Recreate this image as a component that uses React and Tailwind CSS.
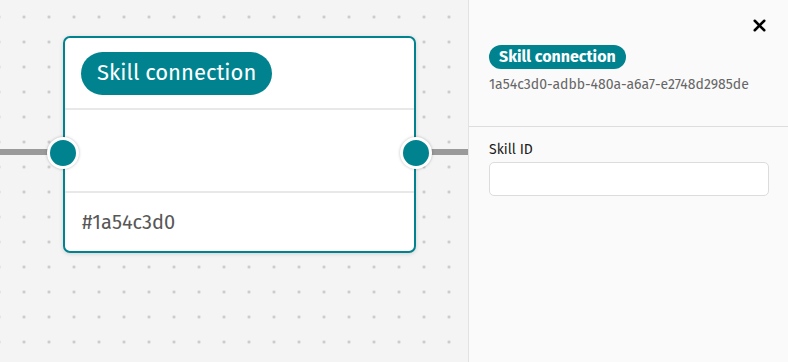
import React from 'react';
import { X } from 'lucide-react';

const FONT = "font-['Fira_Sans','Noto_Sans','Open_Sans',sans-serif]";

function Port({ side }) {
  return (
    <div
      className={`absolute top-[99px] h-[32px] w-[32px] rounded-full border-[3px] border-white bg-[#00838f] shadow-[0_0_3px_rgba(0,0,0,0.25)] ${
        side === 'left' ? 'left-[-18px]' : 'right-[-18px]'
      }`}
    />
  );
}

function SkillNode() {
  return (
    <div className="absolute left-[63px] top-[36px] w-[353px] rounded-[7px] border-2 border-[#00838f] bg-white shadow-[0_1px_4px_rgba(0,0,0,0.15)]">
      <div className="flex h-[72px] items-start border-b-2 border-[#e8e8e8] px-[16px] pt-[14px]">
        <span className="rounded-full bg-[#00838f] px-[16px] pb-[6px] pt-[4px] text-[22px] leading-[33px] text-white">
          Skill connection
        </span>
      </div>
      <div className="h-[83px] border-b-2 border-[#e8e8e8]" />
      <div className="flex h-[58px] items-center px-[17px] text-[20px] text-[#575757]">#1a54c3d0</div>
      <Port side="left" />
      <Port side="right" />
    </div>
  );
}

export default function App() {
  return (
    <div className={`flex h-[362px] w-[788px] overflow-hidden ${FONT}`}>
      {/* canvas */}
      <div className="relative h-full w-[468px] bg-[#f4f4f4] bg-[radial-gradient(circle,#c4c4c4_1.1px,transparent_1.6px)] bg-[size:25px_25px] bg-[position:11.5px_4.5px]">
        <div className="absolute left-0 top-[149px] h-[6px] w-[50px] bg-[#9a9a9a]" />
        <div className="absolute left-[428px] top-[149px] h-[6px] w-[40px] bg-[#9a9a9a]" />
        <SkillNode />
      </div>

      {/* side panel */}
      <div className="flex h-full w-[320px] flex-col border-l border-[#e2e2e2] bg-[#fafafa]">
        <div className="relative border-b border-[#dddddd] px-[20px] pb-[31px] pt-[45px]">
          <button className="absolute right-[19px] top-[16px] text-black">
            <X size={19} strokeWidth={3.2} />
          </button>
          <span className="inline-block rounded-full bg-[#00838f] px-[10px] text-[16px] font-bold leading-[24px] text-white">
            Skill connection
          </span>
          <div className="mt-[6px] text-[14px] leading-[20px] text-[#666666]">
            1a54c3d0-adbb-480a-a6a7-e2748d2985de
          </div>
        </div>
        <div className="px-[20px] pt-[13px]">
          <div className="text-[14px] leading-[20px] text-[#1a1a1a]">Skill ID</div>
          <input className="mt-[2px] h-[34px] w-[280px] rounded-[5px] border border-[#dcdcdc] bg-white px-2 text-[14px] outline-none" />
        </div>
      </div>
    </div>
  );
}
